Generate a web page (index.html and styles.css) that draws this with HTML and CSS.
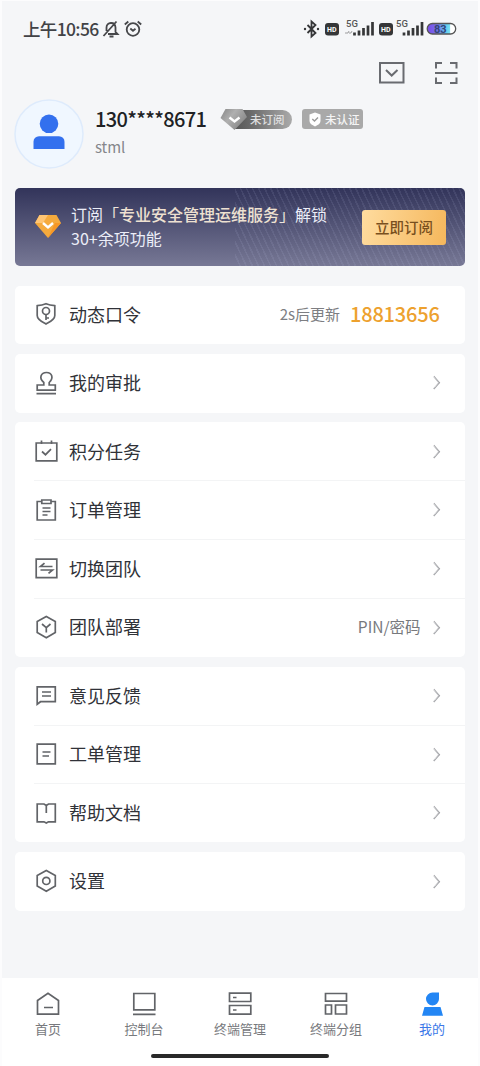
FILE: index.html
```html
<!DOCTYPE html>
<html lang="zh-CN">
<head>
<meta charset="utf-8">
<title>我的</title>
<link rel="stylesheet" href="styles.css">
</head>
<body>
<div class="screen">
  <header class="status">
    <span class="clock">上午10:56</span>
    <svg class="bell" width="18" height="18" viewBox="0 0 18 18"><path d="M4.500 11V7.500C4.500 2 13 1 13.500 7.500V12L15.500 14H6M7.500 16.500h4M1.500 16L14.500 1.500"/></svg>
    <svg class="alarm" width="18" height="18" viewBox="0 0 18 18"><circle cx="9" cy="9.500" r="6.300"/><path d="M.8 4.500L4.300 1.500M17.200 4.500L13.700 1.500M6.300 8.500L9 10.800L11.500 8.800"/></svg>
    <span class="space"></span>
    <svg class="system" width="156" height="20" viewBox="0 0 156 20">
      <defs><linearGradient id="charge"><stop offset="0" stop-color="#7949e8"/><stop offset=".35" stop-color="#7770ec"/><stop offset=".65" stop-color="#5fc8f0"/><stop offset=".8" stop-color="#79e2f2"/><stop offset=".82" stop-color="#fff"/></linearGradient></defs>
      <path class="bt" d="M5.500 6L13.500 14L9.500 17.500V2.500L13.500 6L5.500 14"/><circle cx="3" cy="10" r="1.200"/><circle cx="16" cy="10" r="1.200"/>
      <rect x="23" y="4" width="14" height="12.500" rx="3"/><text class="hd" x="25" y="12.800">HD</text>
      <text class="five" x="44" y="8">5G</text><path class="arrows" d="M43 14h3l1-2M47 14h2l1-2"/>
      <path class="bars" d="M52.500 13.500v3M57 11.500v5M61.500 9v7.500M66 6.500V16.500M70.500 3v13.500"/>
      <rect x="77" y="4" width="14" height="12.500" rx="3"/><text class="hd" x="79" y="12.800">HD</text>
      <text class="five" x="94" y="8">5G</text>
      <path class="bars" d="M102 13.500v3M106.500 11.500v5M111 9v7.500M115.500 6.500V16.500M120 3v13.500"/>
      <rect class="battery" x="125.200" y="4.500" width="28.500" height="10.500" rx="5.200"/><text class="pct" x="132" y="13.500">83</text>
    </svg>
  </header>

  <div class="tools">
    <svg width="26" height="24" viewBox="0 0 26 24"><rect x="1" y="2" width="23.500" height="19.500"/><path d="M7 9L12.700 14.500L18.500 9"/></svg>
    <svg width="24" height="24" viewBox="0 0 24 24"><path d="M2 7.500V2H8M16 2h6.500V7.500M2 16.500V22H8M16 22h6.500V16.500M1 12h22.500"/></svg>
  </div>

  <section class="profile">
    <svg class="avatar" width="70" height="70" viewBox="0 0 70 70"><circle class="disc" cx="35" cy="35" r="34"/><circle cx="35" cy="24.800" r="9.300"/><path d="M19.500 50V42.700a5.500 5.500 0 0 1 5.500-5.500H45a5.500 5.500 0 0 1 5.500 5.500V50z"/></svg>
    <div class="who">
      <div class="nameline">
        <span class="phone">130****8671</span>
        <span class="plan"><svg width="28" height="24" viewBox="0 0 28 24"><defs><linearGradient id="silver" x2="1" y2=".6"><stop offset="0" stop-color="#858585"/><stop offset=".45" stop-color="#b0b0b0"/><stop offset="1" stop-color="#858585"/></linearGradient></defs><path class="stone" d="M5.500 1H22.500L27 9L14.500 22L.5 10z"/><path class="tick" d="M9.500 9.500l5 4 5-4"/></svg><b>未订阅</b></span>
        <span class="verify"><svg width="12" height="15" viewBox="0 0 12 15"><path fill="#fff" d="M6 .5L11.500 2.500V9C11.500 11.500 9 13 6 14.500C3 13 .5 11.500 .5 9V2.500z"/><path class="check" d="M3.300 7l2.200 2 3.500-3.500"/></svg><b>未认证</b></span>
      </div>
      <div class="account">stml</div>
    </div>
  </section>

  <section class="promo">
    <svg class="gem" width="28" height="26" viewBox="0 0 28 26"><path fill="#f5aa3d" d="M5.500 1H22.500L27 9L14 24L1 9z"/><path fill="#ffc574" d="M5.500 1H14L9 9L1 9z"/><path fill="#f79725" d="M14 24L21 9H27z"/><path class="tick" d="M9 9l5 4.500L19 9"/></svg>
    <div class="offer"><div>订阅<span class="quote">「<em>专业安全管理运维服务</em>」</span>解锁</div><div>30+余项功能</div></div>
    <button class="subscribe">立即订阅</button>
  </section>

  <main class="cards">
    <section class="card">
      <div class="row"><svg viewBox="0 0 24 24"><path d="M12 1.700C15 3 18 3.500 20.800 3.700V13.500C20.800 18 15.500 20 12 22C8.500 20 3.200 18 3.200 13.500V3.700C6 3.500 9 3 12 1.700z"/><circle cx="12" cy="9" r="3.500"/><path d="M12 12.500v5.500M12 16h3"/></svg><span class="label">动态口令</span><span class="renew">2s后更新</span><strong class="token">18813656</strong></div>
    </section>
    <section class="card">
      <div class="row"><svg viewBox="0 0 24 24"><path d="M9.800 14V11.500C4.500 7 7 1.500 12.500 1.500S20 7 15.200 11.500V14H21.300V19.200H3.200V14zM2.500 22.700h19.500"/></svg><span class="label">我的审批</span><i class="chev"></i></div>
    </section>
    <section class="card">
      <div class="row"><svg viewBox="0 0 24 24"><path d="M2.200 4H22.800V21.800H2.200zM7.500 1.500V5M17.500 1.500V5M8 12.500l3.500 3.200 5.500-5.500"/></svg><span class="label">积分任务</span><i class="chev"></i></div>
      <div class="row"><svg viewBox="0 0 24 24"><path d="M7.800 3.500H3.200V22H21.300V3.500H17M7.800 2H17V5.500H7.800zM8.500 10h8M8.500 13.500h8M8.500 17h5"/></svg><span class="label">订单管理</span><i class="chev"></i></div>
      <div class="row"><svg viewBox="0 0 24 24"><path d="M2.200 3.200H22.800V21.600H2.200zM18.500 10.500H6.500L10.500 7.200M6.500 14H18.500L14.500 17.300"/></svg><span class="label">切换团队</span><i class="chev"></i></div>
      <div class="row"><svg viewBox="0 0 24 24"><path d="M12.300 1.500L21.300 6.500V17.500L12.300 22.800L3.200 17.500V6.500zM8 9l4.300 3.700L16.500 9M12.300 12.500v5"/></svg><span class="label">团队部署</span><span class="hint">PIN/密码</span><i class="chev"></i></div>
    </section>
    <section class="card">
      <div class="row"><svg viewBox="0 0 24 24"><path d="M3.200 3.800H21.300V18.700H6.500L3.200 21.200zM8 9h9M8 13h9"/></svg><span class="label">意见反馈</span><i class="chev"></i></div>
      <div class="row"><svg viewBox="0 0 24 24"><path d="M3.200 2.200H21.300V21.800H3.200zM8.500 10h8M8.500 14h6.500"/></svg><span class="label">工单管理</span><i class="chev"></i></div>
      <div class="row"><svg viewBox="0 0 24 24"><path d="M3.200 3H10L12.300 4.500L14.500 3H21.300V20.800H14.500L12.300 22L10 20.800H3.200zM12.300 4.500V12"/></svg><span class="label">帮助文档</span><i class="chev"></i></div>
    </section>
    <section class="card">
      <div class="row"><svg viewBox="0 0 24 24"><path d="M12.300 1.500L21.300 6.500V17L12.300 22.300L3.200 17V6.500z"/><circle cx="12.300" cy="11.900" r="3.600"/></svg><span class="label">设置</span><i class="chev"></i></div>
    </section>
  </main>

  <nav class="tabs">
    <a><svg viewBox="0 0 24 24"><path d="M1.500 8.500L12 1.200L22.500 8.500V22.200H1.500zM8 15.500h9"/></svg><span>首页</span></a>
    <a><svg viewBox="0 0 24 24"><path d="M1.800 1.500H22.800V17.800H1.800zM1 22.300h22.500"/></svg><span>控制台</span></a>
    <a><svg viewBox="0 0 24 24"><path d="M1.500 1.200H22.800V9.500H1.500zM1.500 13.500H22.800V22.200H1.500zM5 5.500h3.500M5 18h3.500"/></svg><span>终端管理</span></a>
    <a><svg viewBox="0 0 24 24"><path d="M1.500 1.500H22.500V9.200H1.500zM1.500 13H7.500V22H1.500zM11.500 13H22.500V22H11.500z"/></svg><span>终端分组</span></a>
    <a class="active"><svg viewBox="0 0 24 24"><path d="M19 .5V7A6.500 6.500 0 1 1 12.500 .5zM4.500 15H20.500L23 23.800H2z"/></svg><span>我的</span></a>
  </nav>
  <div class="home"></div>
</div>
</body>
</html>
```
FILE: styles.css
```css
* { box-sizing: border-box; }
body { margin: 0; background: #fff; font-family: "Noto Sans CJK SC", sans-serif; color: #292b30; }
.screen { width: 480px; height: 1066px; display: flex; flex-direction: column; background: #f5f6f8; border: 2px solid #fcfcfd; border-top-width: 1px; border-bottom: 0; overflow: hidden; }
svg { display: block; flex: none; fill: none; stroke: #626468; stroke-width: 1.7; overflow: visible; }

.status { height: 38px; margin-top: 9px; padding: 0 20px 0 21px; display: flex; align-items: center; }
.clock { font-size: 17.5px; letter-spacing: -.65px; color: #414246; line-height: 24px; font-weight: 500; width: 79px; white-space: nowrap; margin-top: -1px; }
.bell, .alarm { stroke: #46474a; stroke-width: 1.8; margin-top: -1px; }
.alarm { margin-left: 4px; }
.space { flex: 1; }
.system { fill: #353638; stroke: none; }
.system .bt, .system .bars, .system .arrows { fill: none; stroke: #353638; }
.system .bt { stroke-width: 1.8; }
.system .bars { stroke-width: 2.7; }
.system .arrows { stroke-width: .8; stroke: #888; }
.hd { font: 700 7px Roboto, sans-serif; fill: #fff; }
.five { font: 500 9.500px Roboto, sans-serif; fill: #555; }
.battery { fill: url(#charge); stroke: #555; stroke-width: 1.3; }
.pct { font: 700 11px Roboto, sans-serif; fill: #324578; }

.tools { height: 24px; margin-top: 13px; display: flex; justify-content: flex-end; gap: 29px; padding-right: 20px; }
.tools svg { stroke: #696b70; stroke-width: 2; }

.profile { display: flex; height: 70px; margin: 14px 0 0 12px; gap: 12px; }
.avatar { fill: #3370ee; stroke: none; }
.avatar .disc { fill: #f0f7ff; stroke: #deebfc; stroke-width: 1.5; }
.who { display: flex; flex-direction: column; padding-top: 7px; }
.nameline { height: 26px; display: flex; align-items: center; }
.phone { width: 125px; margin-left: -1px; font-size: 20px; letter-spacing: -.65px; font-weight: 500; line-height: 26px; color: #202124; white-space: nowrap; }
.plan { display: flex; align-items: center; width: 72px; height: 19px; border-radius: 4px 10px 10px 4px; background: linear-gradient(90deg, transparent 14px, #555 14px, #666 28px, #aaa); }
.plan svg { stroke: none; margin-top: 1px; }
.stone { fill: url(#silver); }
.plan b, .verify b { font-size: 11.5px; font-weight: 500; line-height: 18px; color: #f5f5f5; white-space: nowrap; }
.plan b { margin-left: 2px; color: #e0e0e0; }
.plan .tick, .gem .tick { stroke: #fff; stroke-width: 2.4; }
.verify { display: flex; align-items: center; width: 61px; height: 20px; margin-left: 10px; padding-left: 7px; gap: 4px; background: #a9a9a9; border-radius: 3px; }
.verify svg { stroke: none; }
.verify .check { stroke: #999; stroke-width: 1.4; }
.account { font-size: 15px; line-height: 22px; margin: 4px 0 0 -1px; letter-spacing: -.1px; color: #85878b; }

.promo { height: 78px; margin: 19px 13px 0; padding: 0 19px; display: flex; align-items: center; border-radius: 5px; background: repeating-linear-gradient(65deg, transparent 0 4px, rgba(190,195,230,.1) 4px 5.500px) 220px 0 / 230px 78px no-repeat, linear-gradient(#32345a, #777895); }
.gem { stroke: none; }
.offer { margin: -2px 0 0 9px; flex: 1; font-size: 16px; line-height: 24px; color: #eceef8; white-space: nowrap; }
.quote em { font-style: normal; font-weight: 500; color: #eee1d1; }
.quote { color: #eee5dc; }
.subscribe { width: 84px; height: 35px; padding: 0 0 2px; border: 0; border-radius: 3px; font: 500 14.500px "Noto Sans CJK SC", sans-serif; color: #79501e; background: linear-gradient(100deg, #ffdc9f, #f5b75c); }

.cards { display: flex; flex-direction: column; gap: 9.700px; margin: 19.500px 13px 0; }
.card { background: #fff; border-radius: 5px; }
.row { height: 58.670px; padding: 0 23px 0 19px; display: flex; align-items: center; position: relative; }
.row + .row::before { content: ""; position: absolute; left: 19px; right: 0; top: -.5px; height: 1px; background: #f3f4f5; }
.row svg { width: 24px; height: 24px; margin-top: -1px; }
.label { flex: 1; margin: -2px 0 0 11px; font-size: 18px; line-height: 26px; color: #303238; }
.chev { width: 8.500px; height: 8.500px; border: solid #a4a5a9; border-width: 1.500px 1.500px 0 0; transform: rotate(45deg) skew(4deg, 4deg); margin: -1px 4px 0 0; box-shadow: inset -.5px .5px #b7b8bc; }
.renew { font-size: 15px; color: #7d7e82; line-height: 22px; margin: -1px 10px 0 0; }
.token { font-size: 20px; line-height: 26px; font-weight: 500; color: #eda12e; width: 92px; letter-spacing: -.2px; margin-top: -1px; }
.hint { font-size: 15.500px; line-height: 22px; color: #77797d; margin: -2px 9px 0 0; }

.tabs { height: 75px; margin: auto -2px 0; padding-top: 14px; background: #fff; display: flex; flex: none; }
.tabs a { width: 96px; display: flex; flex-direction: column; align-items: center; font-size: 13px; line-height: 18px; color: #77797d; }
.tabs svg { width: 24px; height: 24px; margin-bottom: 4px; }
.tabs .active { color: #3c78e8; }
.tabs .active svg { fill: #2386f4; stroke: none; }
.home { height: 13px; flex: none; margin: 0 -2px; background: #fff; display: flex; justify-content: center; }
.home::before { content: ""; width: 178px; height: 4px; margin-top: 1px; border-radius: 2px; background: #292929; }
```
